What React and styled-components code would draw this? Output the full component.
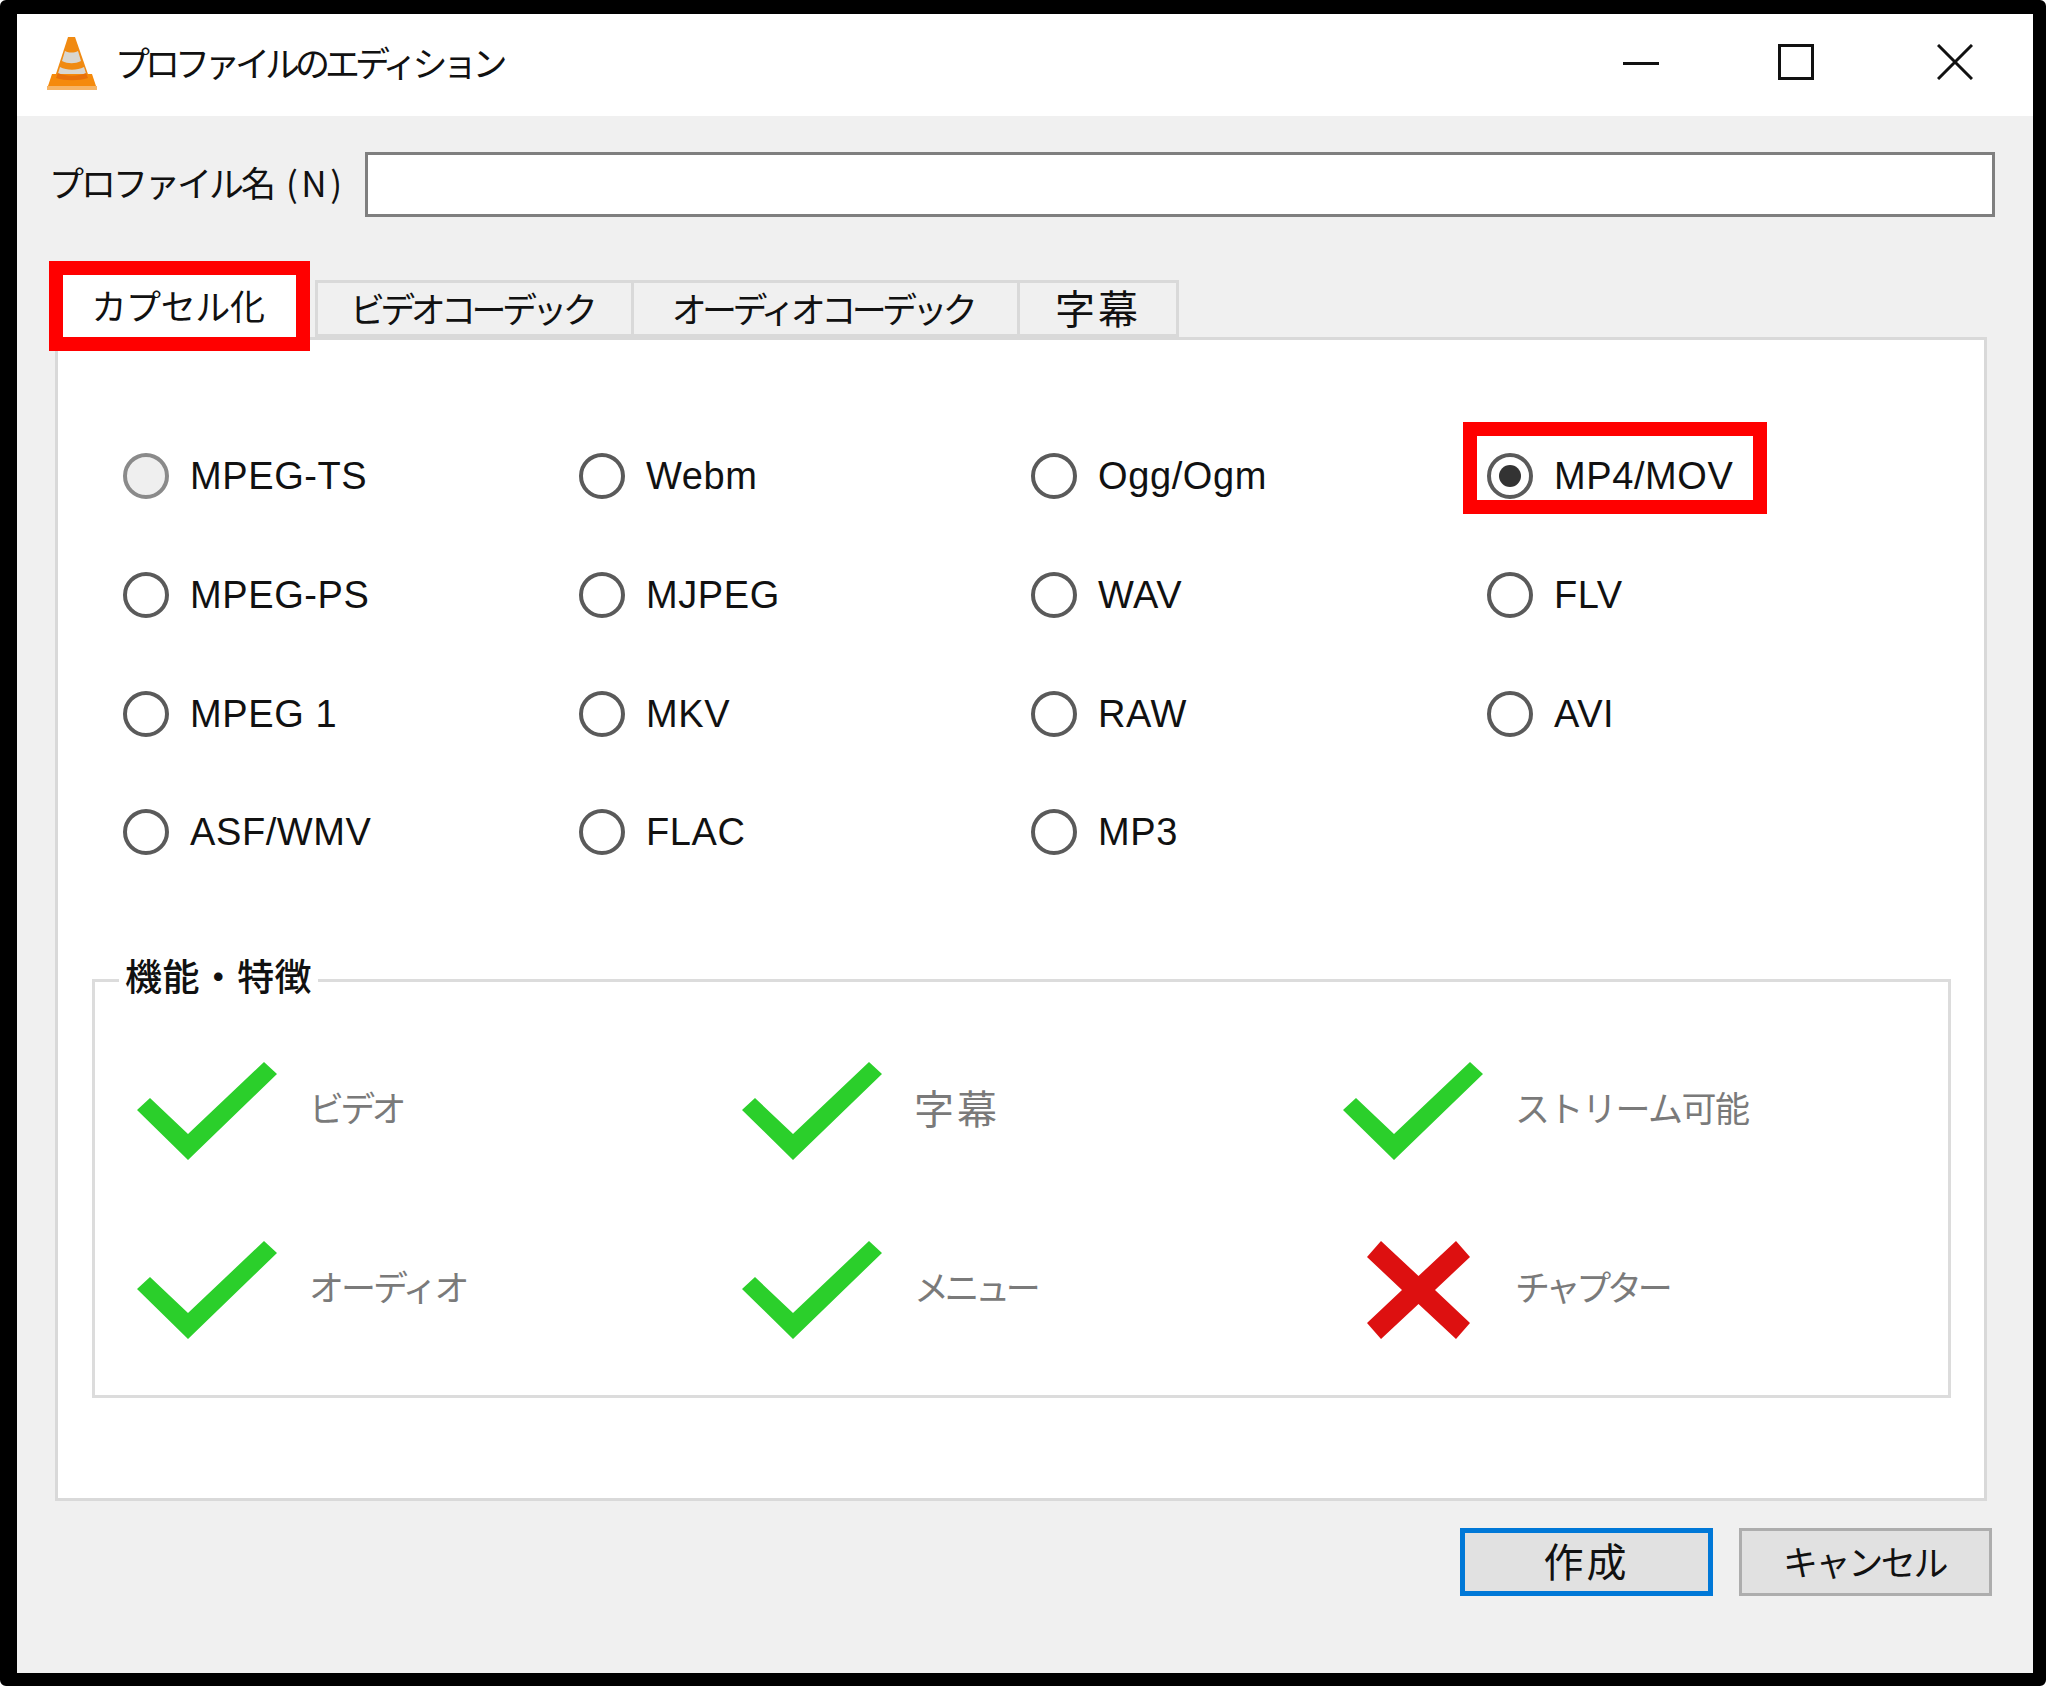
import React from 'react';
import styled, { createGlobalStyle } from 'styled-components';

const GlobalStyle = createGlobalStyle`
  html, body {
    margin: 0;
    padding: 0;
    background: #fff;
  }
  * {
    box-sizing: border-box;
  }
`;

const FONT = '"Noto Sans CJK JP", "Liberation Sans", sans-serif';
const LATIN = '"Liberation Sans", "Noto Sans CJK JP", sans-serif';

const Frame = styled.div`
  width: 2046px;
  height: 1686px;
  display: flex;
  flex-direction: column;
  border-style: solid;
  border-color: #000;
  border-width: 14px 13px 13px 17px;
  border-radius: 6px;
  background: #f0f0f0;
  font-family: ${FONT};
  color: #111;
  overflow: hidden;
`;

const TitleBar = styled.div`
  height: 102px;
  flex: none;
  display: flex;
  align-items: center;
  padding-left: 30px;
  background: #fff;
`;

const ConeSvg = styled.svg`
  flex: none;
  margin-bottom: 5px;
`;

const TitleText = styled.span`
  margin-left: 18px;
  margin-bottom: 8px;
  font-size: 35px;
  letter-spacing: -5px;
  line-height: 1;
`;

const WindowButtons = styled.div`
  margin-left: auto;
  margin-bottom: 6px;
  display: flex;
  align-items: center;
  padding-right: 60px;
`;

const WindowButton = styled.svg`
  flex: none;
  margin-left: ${props => props.$gap}px;
`;

const Body = styled.div`
  flex: 1;
  display: flex;
  flex-direction: column;
  padding: 36px 38px 0 32px;
`;

const NameRow = styled.div`
  display: flex;
  align-items: center;
  height: 65px;
`;

const NameLabel = styled.label`
  width: 316px;
  padding-bottom: 7px;
  font-size: 35px;
  letter-spacing: -3px;
  white-space: nowrap;
`;

const Mnemonic = styled.span`
  margin-left: 13px;
  letter-spacing: 3.5px;
`;

const NameInput = styled.input`
  flex: 1;
  height: 65px;
  border: 3px solid #7f7f7f;
  background: #fff;
  outline: none;
`;

const TabStrip = styled.div`
  display: flex;
  align-items: flex-end;
  margin-top: 44px;
  height: 76px;
  position: relative;
  z-index: 1;
`;

const ActiveTab = styled.div`
  width: 261px;
  height: 90px;
  margin-bottom: -14px;
  margin-right: 5px;
  padding: 0 3px 4px 0;
  flex: none;
  display: flex;
  align-items: center;
  justify-content: center;
  border: 14px solid #ff0000;
  background: #fff;
  font-size: 35px;
  letter-spacing: -0.4px;
`;

const Tab = styled.div`
  width: ${props => props.$width}px;
  height: 57px;
  flex: none;
  display: flex;
  align-items: center;
  justify-content: center;
  padding: 0 ${props => props.$wide ? 0 : 6}px 3px 0;
  border: 3px solid #d9d9d9;
  border-left-width: ${props => props.$first ? 3 : 0}px;
  background: #f0f0f0;
  font-size: ${props => props.$wide ? 40 : 35}px;
  letter-spacing: ${props => props.$wide ? '3px' : '-4.6px'};
`;

const Pane = styled.div`
  width: 1932px;
  height: 1164px;
  margin-left: 6px;
  padding: 77px 34px 0 65px;
  border: 3px solid #d9d9d9;
  background: #fff;
`;

const RadioGrid = styled.div`
  display: grid;
  grid-template-columns: 456px 452px 456px 1fr;
  grid-auto-rows: 118.7px;
`;

const RadioItem = styled.div`
  position: relative;
  display: flex;
  align-items: center;
  gap: 21px;
`;

const RadioCircle = styled.span`
  width: 46px;
  height: 46px;
  flex: none;
  display: flex;
  align-items: center;
  justify-content: center;
  border: 4px solid ${props => props.$muted ? '#8a8a8a' : '#5a5a5a'};
  border-radius: 50%;
  background: ${props => props.$muted ? '#efefef' : '#fff'};
`;

const RadioDot = styled.span`
  width: 22px;
  height: 22px;
  border-radius: 50%;
  background: #333;
`;

const RadioLabel = styled.span`
  font-family: ${LATIN};
  font-size: 38px;
  letter-spacing: 0.6px;
  line-height: 1;
  white-space: nowrap;
`;

const Highlight = styled.span`
  position: absolute;
  left: -24px;
  top: 5px;
  width: 304px;
  height: 92px;
  border: 14px solid #ff0000;
  pointer-events: none;
`;

const FeatureBox = styled.div`
  position: relative;
  width: 1859px;
  height: 419px;
  margin: 87px 0 0 -31px;
  padding: 40px 0 0 42px;
  border: 3px solid #dcdcdc;
`;

const Legend = styled.span`
  position: absolute;
  left: 24px;
  top: -31px;
  padding: 0 6px;
  background: #fff;
  font-size: 37px;
  font-weight: 500;
  line-height: 48px;
  letter-spacing: 0.4px;
`;

const FeatureGrid = styled.div`
  display: grid;
  grid-template-columns: 605px 601px 1fr;
  grid-auto-rows: 179px;
`;

const Feature = styled.div`
  display: flex;
  align-items: center;
`;

const FeatureIcon = styled.svg`
  width: 174px;
  height: 98px;
  flex: none;
  margin-right: -2px;
`;

const FeatureLabel = styled.span`
  padding-bottom: 9px;
  font-size: ${props => props.$wide ? 40 : 35}px;
  letter-spacing: ${props => props.$spacing}px;
  color: #7a7a7a;
  white-space: nowrap;
`;

const Footer = styled.div`
  display: flex;
  justify-content: flex-end;
  gap: 26px;
  margin-top: 27px;
  padding-right: 3px;
`;

const Button = styled.button`
  width: 253px;
  height: 68px;
  padding: 0 ${props => props.$primary ? 0 : 2}px 4px 0;
  border: ${props => props.$primary ? '5px solid #0078d7' : '3px solid #adadad'};
  background: #e1e1e1;
  color: #111;
  font-family: ${FONT};
  font-size: ${props => props.$primary ? 40 : 35}px;
  letter-spacing: ${props => props.$primary ? '3px' : '-2.4px'};
  line-height: 1;
`;

const RADIOS = [
  ['MPEG-TS', 'Webm', 'Ogg/Ogm', 'MP4/MOV'],
  ['MPEG-PS', 'MJPEG', 'WAV', 'FLV'],
  ['MPEG 1', 'MKV', 'RAW', 'AVI'],
  ['ASF/WMV', 'FLAC', 'MP3'],
];

const FEATURES = [
  { label: 'ビデオ', ok: true, spacing: -3.7 },
  { label: '字幕', ok: true, spacing: 3, wide: true },
  { label: 'ストリーム可能', ok: true, spacing: -1.5 },
  { label: 'オーディオ', ok: true, spacing: -3 },
  { label: 'メニュー', ok: true, spacing: -4.4 },
  { label: 'チャプター', ok: false, spacing: -4.2 },
];

function ConeIcon() {
  return (
    <ConeSvg width="50" height="54" viewBox="0 0 50 54">
      <path d="M21 1h7l15 43H7z" fill="#f08a12" />
      <path d="M18 15c4 2 9 2 13 0l3 10c-6 3-13 3-19 0z" fill="#d9d6d0" />
      <path d="M13 31c7 3.500 17 3.500 24 0l2.500 8c-9 3.500-20 3.500-29 0z" fill="#d9d6d0" />
      <path d="M5 38h40l5 15H0z" fill="#f58a0c" />
      <path d="M11 37c8 3.500 20 3.500 28 0l2 5c-9 3-23 3-32 0z" fill="#e8700a" />
      <path d="M0 50h50v4H0z" fill="#f6b465" />
    </ConeSvg>
  );
}

function WindowIcon({ kind, gap }) {
  return (
    <WindowButton $gap={gap} width="36" height="36" viewBox="0 0 36 36" fill="none" stroke="#111" strokeWidth="3">
      {kind === 'min' && <path d="M0 19.500h36" />}
      {kind === 'max' && <rect x="1.500" y="1.500" width="33" height="33" />}
      {kind === 'close' && <path d="M1 1l34 34M35 1L1 35" />}
    </WindowButton>
  );
}

function StatusIcon({ ok }) {
  return (
    <FeatureIcon viewBox="0 0 174 98">
      {ok
        ? <path d="M0 48L13 36 51 72 127 0 140 12 51 98z" fill="#2bcf2b" />
        : <path d="M38 0L75.500 35 113 0 127 16 92 49 127 82 113 98 75.500 63 38 98 24 82 59 49 24 16z" fill="#dd1010" />}
    </FeatureIcon>
  );
}

function App() {
  return (
    <>
      <GlobalStyle />
      <Frame>
        <TitleBar>
          <ConeIcon />
          <TitleText>プロファイルのエディション</TitleText>
          <WindowButtons>
            <WindowIcon kind="min" gap={0} />
            <WindowIcon kind="max" gap={119} />
            <WindowIcon kind="close" gap={123} />
          </WindowButtons>
        </TitleBar>
        <Body>
          <NameRow>
            <NameLabel>プロファイル名<Mnemonic>(N)</Mnemonic></NameLabel>
            <NameInput />
          </NameRow>
          <TabStrip>
            <ActiveTab>カプセル化</ActiveTab>
            <Tab $width={319} $first>ビデオコーデック</Tab>
            <Tab $width={386}>オーディオコーデック</Tab>
            <Tab $width={159} $wide>字幕</Tab>
          </TabStrip>
          <Pane>
            <RadioGrid>
              {RADIOS.flat().map((name) => (
                <RadioItem key={name}>
                  <RadioCircle $muted={name === 'MPEG-TS'}>
                    {name === 'MP4/MOV' && <RadioDot />}
                  </RadioCircle>
                  <RadioLabel>{name}</RadioLabel>
                  {name === 'MP4/MOV' && <Highlight />}
                </RadioItem>
              ))}
            </RadioGrid>
            <FeatureBox>
              <Legend>機能・特徴</Legend>
              <FeatureGrid>
                {FEATURES.map((item) => (
                  <Feature key={item.label}>
                    <StatusIcon ok={item.ok} />
                    <FeatureLabel $spacing={item.spacing} $wide={item.wide}>{item.label}</FeatureLabel>
                  </Feature>
                ))}
              </FeatureGrid>
            </FeatureBox>
          </Pane>
          <Footer>
            <Button $primary>作成</Button>
            <Button>キャンセル</Button>
          </Footer>
        </Body>
      </Frame>
    </>
  );
}

export default App;
